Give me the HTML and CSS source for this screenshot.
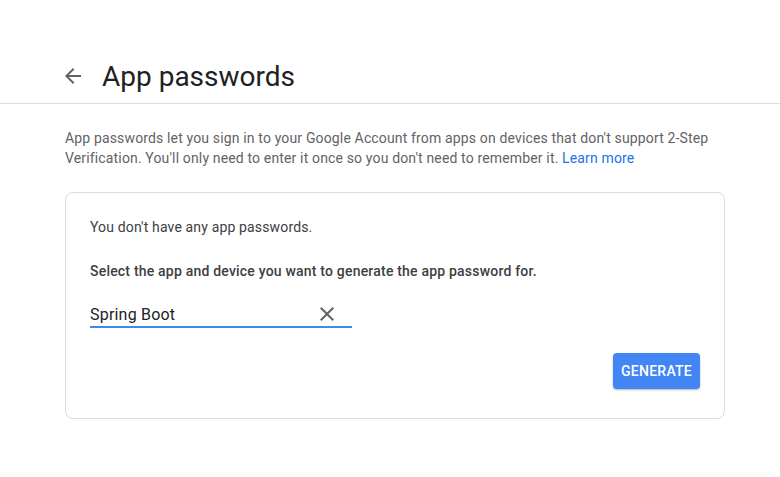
FILE: index.html
```html
<!DOCTYPE html>
<html>
<head>
  <meta charset="UTF-8">
  <title>App passwords</title>
  <link rel="stylesheet" href="styles.css">
</head>
<body>
  <header class="cabecera">
    <a class="volver" href="#">
      <svg width="24" height="24" viewBox="0 0 24 24"><path d="M20 11H7.83l5.59-5.59L12 4l-8 8 8 8 1.41-1.41L7.83 13H20v-2z" fill="#5f6368"/></svg>
    </a>
    <h1>App passwords</h1>
  </header>

  <main class="contenido">
    <p class="intro">App passwords let you sign in to your Google Account from apps on devices that don't support 2-Step Verification. You'll only need to enter it once so you don't need to remember it. <a href="#">Learn more</a></p>

    <section class="tarjeta">
      <p class="vacio">You don't have any app passwords.</p>
      <p class="instruccion">Select the app and device you want to generate the app password for.</p>
      <div class="campo">
        <span class="campo-valor">Spring Boot</span>
        <svg class="limpiar" width="24" height="24" viewBox="0 0 24 24"><path d="M19 6.41L17.59 5 12 10.59 6.41 5 5 6.41 10.59 12 5 17.59 6.41 19 12 13.41 17.59 19 19 17.59 13.41 12z" fill="#5f6368"/></svg>
      </div>
      <div class="acciones">
        <button class="boton">Generate</button>
      </div>
    </section>
  </main>
</body>
</html>
```

FILE: styles.css
```css
/* Estilos generales */
body {
  font-family: Roboto, 'Liberation Sans', sans-serif;
  margin: 0;
  padding: 0;
  background-color: #fff;
}

.cabecera {
  display: flex;
  align-items: center;
  height: 54px;
  padding: 49px 0 0 61px;
  border-bottom: 1px solid #dadce0;
}

.volver {
  display: flex;
  margin-right: 17px;
}

.cabecera h1 {
  margin: 0;
  font-size: 28px;
  font-weight: 400;
  color: #202124;
}

.contenido {
  width: 660px;
  margin-left: 65px;
}

.intro {
  margin: 24px 0 24px;
  font-size: 14px;
  line-height: 20px;
  letter-spacing: 0.15px;
  color: #5f6368;
}

.intro a {
  color: #1a73e8;
  text-decoration: none;
}

/* Tarjeta */
.tarjeta {
  border: 1px solid #dadce0;
  border-radius: 8px;
  padding: 24px 24px 29px;
}

.vacio {
  margin: 0 0 24px;
  font-size: 14px;
  line-height: 20px;
  letter-spacing: 0.15px;
  color: #3c4043;
}

.instruccion {
  margin: 0 0 21px;
  font-size: 14px;
  line-height: 20px;
  font-weight: 500;
  letter-spacing: 0.2px;
  color: #3c4043;
}

.campo {
  display: flex;
  align-items: center;
  width: 262px;
  height: 24px;
  border-bottom: 2px solid #4285f4;
}

.campo-valor {
  flex-grow: 1;
  font-size: 16px;
  letter-spacing: 0.2px;
  color: #202124;
}

.limpiar {
  margin-right: 13px;
}

.acciones {
  display: flex;
  justify-content: flex-end;
  margin-top: 25px;
}

.boton {
  height: 36px;
  padding: 0 8px;
  border: none;
  border-radius: 4px;
  background-color: #4285f4;
  color: #fff;
  font-family: Roboto, sans-serif;
  font-size: 14px;
  font-weight: 500;
  letter-spacing: 0.25px;
  text-transform: uppercase;
  box-shadow: 0 1px 2px rgba(0, 0, 0, 0.3);
  cursor: pointer;
}
```
